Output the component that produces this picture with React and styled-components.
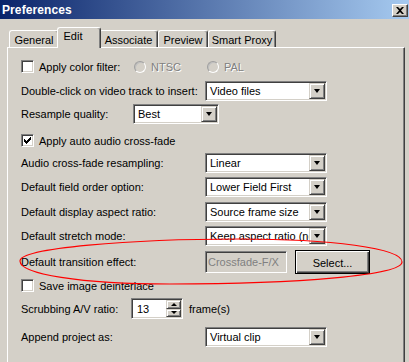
import React from "react";
import styled, { createGlobalStyle } from "styled-components";

const Global = createGlobalStyle`
  html, body { margin: 0; padding: 0; background: #d4d0c8; }
  body { font-family: "Liberation Sans", Arial, sans-serif; font-size: 11px; color: #000; }
`;

const Window = styled.div`
  position: relative;
  width: 409px;
  height: 362px;
  overflow: hidden;
  background: #d4d0c8;
`;

const TitleBar = styled.div`
  height: 19px;
  display: flex;
  align-items: center;
  padding-left: 2px;
  padding-right: 1px;
  background: linear-gradient(to right, #0a246a 0%, #a6caf0 100%);
`;

const Title = styled.div`
  flex: 1;
  color: #fff;
  font-weight: bold;
  font-size: 12px;
  letter-spacing: 0.1px;
`;

const CloseButton = styled.div`
  width: 16px;
  height: 13px;
  box-sizing: border-box;
  background: #d4d0c8;
  border: 1px solid;
  border-color: #fff #404040 #404040 #fff;
  box-shadow: inset -1px -1px #808080;
  display: flex;
  align-items: center;
  justify-content: center;
  margin-top: 1px;
`;

const Body = styled.div`
  padding: 8px 0 0 7px;
`;

const TabStrip = styled.div`
  display: flex;
  align-items: flex-end;
  height: 20px;
  padding-left: 2px;
  position: relative;
  z-index: 1;
`;

const Tab = styled.div`
  box-sizing: border-box;
  width: ${(p) => p.w}px;
  height: ${(p) => (p.active ? 21 : 17)}px;
  margin: ${(p) => (p.active ? "0 -2px -1px -2px" : "0")};
  padding: ${(p) => (p.active ? "2px 0 0 0" : "3px 0 0 0")};
  padding-right: ${(p) => p.shift || 0}px;
  background: #d4d0c8;
  border-top: 1px solid #fff;
  border-left: 1px solid #fff;
  border-right: 1px solid #404040;
  border-radius: 3px 3px 0 0;
  box-shadow: inset -1px 0 #808080;
  text-align: center;
  white-space: nowrap;
  z-index: ${(p) => (p.active ? 2 : 1)};
  position: relative;
`;

const Panel = styled.div`
  box-sizing: border-box;
  width: 398px;
  height: 330px;
  border-top: 1px solid #fff;
  border-left: 1px solid #fff;
  border-right: 1px solid #404040;
  box-shadow: inset -1px 0 #808080;
  padding-left: 13px;
  display: flex;
  flex-direction: column;
`;

const Row = styled.div`
  display: flex;
  align-items: center;
  height: ${(p) => p.h}px;
  margin-top: ${(p) => p.mt}px;
  white-space: nowrap;
`;

const Label = styled.div`
  width: ${(p) => p.w}px;
  flex: none;
`;

const CheckBox = styled.div`
  width: 13px;
  height: 13px;
  box-sizing: border-box;
  flex: none;
  background: #fff;
  border: 1px solid;
  border-color: #808080 #fff #fff #808080;
  box-shadow: inset 1px 1px #404040, inset -1px -1px #d4d0c8;
  display: flex;
  align-items: center;
  justify-content: center;
`;

const CheckText = styled.div`
  margin-left: 5px;
  width: ${(p) => (p.w ? `${p.w}px` : "auto")};
  flex: none;
`;

const RadioOption = styled.div`
  display: flex;
  align-items: center;
  width: ${(p) => p.w}px;
  flex: none;
`;

const Radio = styled.div`
  width: 12px;
  height: 12px;
  box-sizing: border-box;
  border-radius: 50%;
  border: 1px solid;
  border-color: #a0a0a0 #fff #fff #a0a0a0;
  background: #d4d0c8;
  box-shadow: inset 1px 1px #c0c0c0;
`;

const DisabledText = styled.div`
  margin-left: 5px;
  color: #808080;
  text-shadow: 1px 1px #fff;
`;

const Combo = styled.div`
  width: ${(p) => p.w}px;
  height: ${(p) => p.h || 20}px;
  box-sizing: border-box;
  flex: none;
  background: #fff;
  border: 1px solid;
  border-color: #808080 #fff #fff #808080;
  box-shadow: inset 1px 1px #404040, inset -1px -1px #d4d0c8;
  padding: 1px;
  display: flex;
  align-items: center;
`;

const ComboText = styled.div`
  flex: 1;
  overflow: hidden;
  padding-left: 3px;
  white-space: nowrap;
`;

const DropButton = styled.div`
  width: 16px;
  height: 16px;
  box-sizing: border-box;
  flex: none;
  background: #d4d0c8;
  border: 1px solid;
  border-color: #d4d0c8 #404040 #404040 #d4d0c8;
  box-shadow: inset 1px 1px #fff, inset -1px -1px #808080;
  display: flex;
  align-items: center;
  justify-content: center;
`;

const Arrow = styled.div`
  width: 0;
  height: 0;
  border-left: 3.5px solid transparent;
  border-right: 3.5px solid transparent;
  border-top: ${(p) => (p.small ? 3 : 4)}px solid #000;
  ${(p) => p.up && `border-top: none; border-bottom: 3px solid #000;`}
`;

const TextBox = styled(Combo)`
  background: ${(p) => (p.disabled ? "#d4d0c8" : "#fff")};
  color: ${(p) => (p.disabled ? "#808080" : "#000")};
  padding-left: 2px;
`;

const Button = styled.div`
  width: 75px;
  height: 24px;
  box-sizing: border-box;
  margin-left: 8px;
  flex: none;
  background: #d4d0c8;
  border: 1px solid #000;
  box-shadow: inset 1px 1px #fff, inset -1px -1px #404040, inset -2px -2px #808080;
  display: flex;
  align-items: center;
  justify-content: center;
  padding-top: 1px;
`;

const SpinButtons = styled.div`
  margin-left: auto;
  display: flex;
  flex-direction: column;
  width: 15px;
  height: 17px;
  flex: none;
`;

const SpinHalf = styled.div`
  flex: 1;
  box-sizing: border-box;
  background: #d4d0c8;
  border: 1px solid;
  border-color: #d4d0c8 #404040 #404040 #d4d0c8;
  box-shadow: inset 1px 1px #fff, inset -1px -1px #808080;
  display: flex;
  align-items: center;
  justify-content: center;
`;

const After = styled.div`
  margin-left: 6px;
`;

const Overlay = styled.svg`
  position: absolute;
  left: 0;
  top: 0;
  pointer-events: none;
`;

function Check() {
  return (
    <svg width="7" height="7" viewBox="0 0 7 7">
      <path d="M0 2h1v1h1v1h1V3h1V2h1V1h1V0h1v3H6v1H5v1H4v1H3v1H2V6H1V5H0z" fill="#000" />
    </svg>
  );
}

function Dropdown({ w, value }) {
  return (
    <Combo w={w}>
      <ComboText>{value}</ComboText>
      <DropButton>
        <Arrow />
      </DropButton>
    </Combo>
  );
}

export default function App() {
  return (
    <Window>
      <Global />
      <TitleBar>
        <Title>Preferences</Title>
        <CloseButton>
          <svg width="8" height="7" viewBox="0 0 8 7">
            <path d="M0 0h2l2 2 2-2h2L5 3.5 8 7H6L4 5 2 7H0l3-3.5z" fill="#000" />
          </svg>
        </CloseButton>
      </TitleBar>
      <Body>
        <TabStrip>
          <Tab w={50}>General</Tab>
          <Tab w={44} active shift={12}>Edit</Tab>
          <Tab w={59}>Associate</Tab>
          <Tab w={50}>Preview</Tab>
          <Tab w={68}>Smart Proxy</Tab>
        </TabStrip>
        <Panel>
          <Row h={13} mt={12}>
            <CheckBox />
            <CheckText w={95}>Apply color filter:</CheckText>
            <RadioOption w={73}>
              <Radio />
              <DisabledText>NTSC</DisabledText>
            </RadioOption>
            <RadioOption w={60}>
              <Radio />
              <DisabledText>PAL</DisabledText>
            </RadioOption>
          </Row>
          <Row h={20} mt={8}>
            <Label w={184}>Double-click on video track to insert:</Label>
            <Dropdown w={122} value="Video files" />
          </Row>
          <Row h={20} mt={3}>
            <Label w={112}>Resample quality:</Label>
            <Dropdown w={86} value="Best" />
          </Row>
          <Row h={13} mt={10}>
            <CheckBox>
              <Check />
            </CheckBox>
            <CheckText>Apply auto audio cross-fade</CheckText>
          </Row>
          <Row h={20} mt={6}>
            <Label w={184}>Audio cross-fade resampling:</Label>
            <Dropdown w={122} value="Linear" />
          </Row>
          <Row h={20} mt={4}>
            <Label w={184}>Default field order option:</Label>
            <Dropdown w={122} value="Lower Field First" />
          </Row>
          <Row h={20} mt={5}>
            <Label w={184}>Default display aspect ratio:</Label>
            <Dropdown w={122} value="Source frame size" />
          </Row>
          <Row h={20} mt={4}>
            <Label w={184}>Default stretch mode:</Label>
            <Dropdown w={122} value="Keep aspect ratio (no scaling)" />
          </Row>
          <Row h={24} mt={4}>
            <Label w={184}>Default transition effect:</Label>
            <TextBox w={82} h={22} disabled>
              Crossfade-F/X
            </TextBox>
            <Button>Select...</Button>
          </Row>
          <Row h={13} mt={5}>
            <CheckBox />
            <CheckText>Save image deinterlace</CheckText>
          </Row>
          <Row h={21} mt={6}>
            <Label w={110}>Scrubbing A/V ratio:</Label>
            <TextBox w={52} h={21}>
              <ComboText>13</ComboText>
              <SpinButtons>
                <SpinHalf>
                  <Arrow up />
                </SpinHalf>
                <SpinHalf>
                  <Arrow small />
                </SpinHalf>
              </SpinButtons>
            </TextBox>
            <After>frame(s)</After>
          </Row>
          <Row h={21} mt={7}>
            <Label w={184}>Append project as:</Label>
            <Dropdown w={122} value="Virtual clip" />
          </Row>
        </Panel>
      </Body>
      <Overlay width="409" height="362" viewBox="0 0 409 362">
        <path
          d="M20 261 C20 248 130 239 240 239 C330 239 402 248 402 262 C402 275 300 284 170 284 C80 284 20 274 20 261 Z"
          fill="none"
          stroke="#ff0000"
          strokeWidth="1.2"
        />
      </Overlay>
    </Window>
  );
}
